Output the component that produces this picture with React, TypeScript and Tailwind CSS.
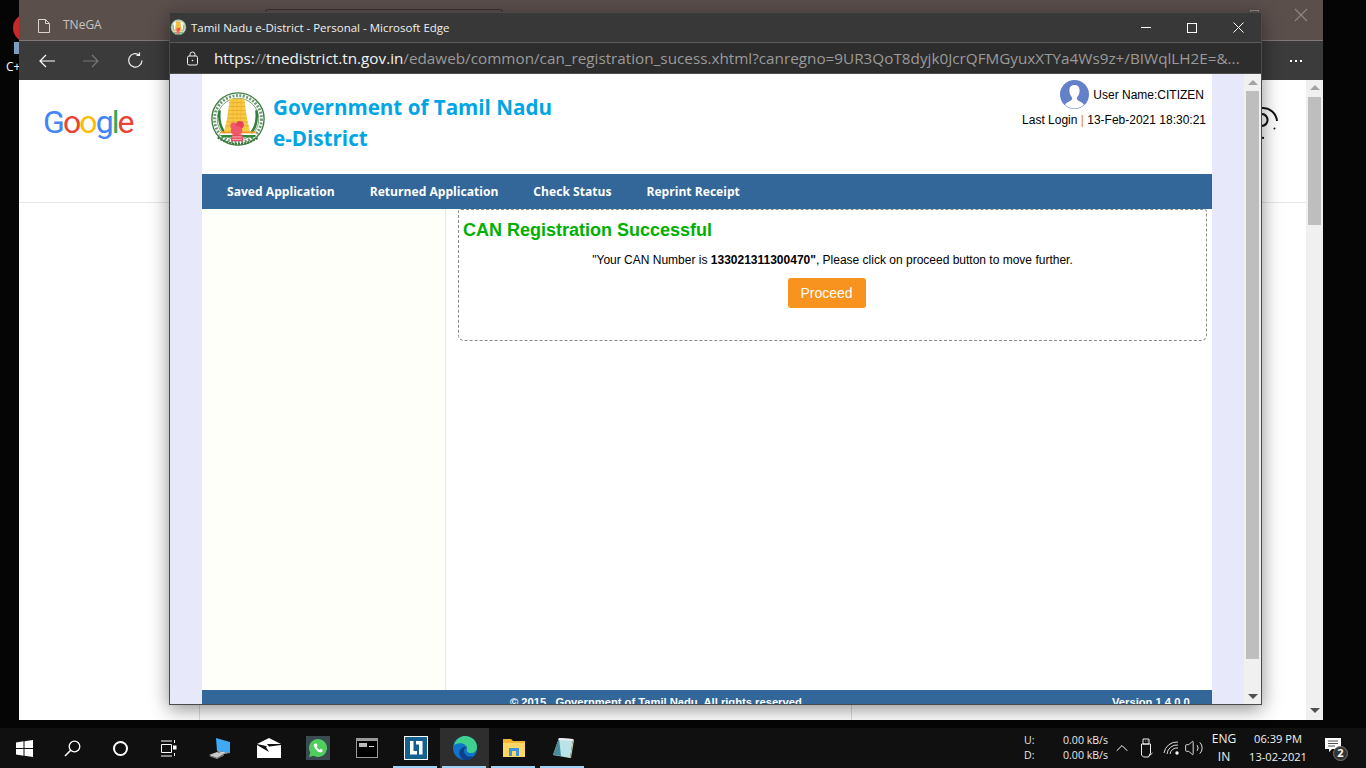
import { ChevronUp, Volume2 } from "lucide-react";

const segoe = "font-['Open_Sans','Noto_Sans',sans-serif]";
const navItems = ["Saved Application", "Returned Application", "Check Status", "Reprint Receipt"];

function Emblem({ size }: { size: number }) {
  return (
    <svg width={size} height={size} viewBox="0 0 60 60">
      <circle cx="30" cy="29" r="27" fill="#fff" stroke="#3f7d3f" strokeWidth="1.4" />
      <circle cx="30" cy="29" r="24.3" fill="none" stroke="#2f6b3a" strokeWidth="3" strokeDasharray="2 1.6" opacity="0.7" />
      <circle cx="30" cy="29" r="21.5" fill="#fff" stroke="#4f8d4f" strokeWidth="0.8" />
      <path d="M11 20 q-2 15 6 24 M49 20 q2 15 -6 24" fill="none" stroke="#2f7d3a" strokeWidth="2.6" />
      <path d="M21.500 8 h15 l1.500 12 2 12 3 12 h-28 l3 -12 2 -12z" fill="#f8cb45" />
      <path d="M21 12 h16 M20.500 16 h17 M20 20 h18 M19.500 24 h19 M19 28 h20 M18 32 h22 M17 36 h24" stroke="#e7a52a" strokeWidth="0.9" />
      <path d="M25 8v30 M29 8v30 M33 8v30" stroke="#eeb32e" strokeWidth="0.7" />
      <path d="M12 42 h36 l1 2 h-38z" fill="#f39a2c" />
      <path d="M11 44 h38 v1.600 h-38z" fill="#fff" />
      <path d="M12 45.600 h36 l-1.500 2.400 h-33z" fill="#2e8b3e" />
      <circle cx="25.500" cy="36" r="3.400" fill="#ee5a70" />
      <circle cx="32" cy="35" r="4" fill="#e83f5a" />
      <ellipse cx="28.500" cy="41" rx="6" ry="5" fill="#f0566c" />
      <path d="M23.500 45 h11 l1 7 h-13z" fill="#ea4b62" />
      <path d="M24 47.500 h10 M24 50 h10" stroke="#fcc" strokeWidth="0.8" />
      <path d="M9 48 q21 14 42 0" fill="none" stroke="#3f7d3f" strokeWidth="2.400" strokeDasharray="2.200 1" />
    </svg>
  );
}

function TaskButton({ children, active, running }: { children: React.ReactNode; active?: boolean; running?: boolean }) {
  return (
    <div className={`relative flex h-full w-[49px] items-center justify-center ${active ? "bg-[#2e2e2e]" : ""}`}>
      {children}
      {running && <div className="absolute bottom-0 left-[2px] right-[3px] h-[2px] bg-[#9fd0f5]" />}
    </div>
  );
}

function BackWindow() {
  return (
    <div className="absolute left-[19px] top-0 flex h-[720px] w-[1304px] flex-col">
      <div className="relative flex h-[40px] shrink-0 items-center bg-[#5b4f4c] pl-[18px] pt-[11px]">
        <svg width="14" height="16" viewBox="0 0 14 16" fill="none" stroke="#d8d4d2" strokeWidth="1">
          <path d="M1.500 1.500 h7 l4 4 v9 h-11z M8.500 1.500 v4 h4" />
        </svg>
        <span className={`${segoe} ml-[12px] mt-[-1px] text-[12px] text-[#c9c2bf]`}>TNeGA</span>
        <div className="absolute left-[246px] top-[9px] h-[4px] w-[238px] rounded-t-[3px] border border-[#3a3230]" />
        <div className="absolute left-[1231px] top-[10px] h-[3px] w-[9px] border border-b-0 border-[#8f8784]" />
        <svg className="absolute left-[1275px] top-[8px]" width="14" height="14" viewBox="0 0 14 14" stroke="#8f8784" strokeWidth="1.100">
          <path d="M1 1 L13 13 M13 1 L1 13" />
        </svg>
      </div>
      <div className="flex h-[40px] shrink-0 items-center justify-between border-t border-[#807876] bg-[#3b3b3b] pl-[20px] pr-[20px]">
        <div className="flex items-center gap-[28px]">
          <svg width="16" height="14" viewBox="0 0 16 14" fill="none" stroke="#fff" strokeWidth="1.200">
            <path d="M16 7 H1 M7 1 L1 7 L7 13" />
          </svg>
          <svg width="16" height="14" viewBox="0 0 16 14" fill="none" stroke="#777" strokeWidth="1.200">
            <path d="M0 7 H15 M9 1 L15 7 L9 13" />
          </svg>
          <svg width="17" height="17" viewBox="0 0 17 17" fill="none" stroke="#f2f2f2" strokeWidth="1.200">
            <path d="M15 8.500 A6.700 6.700 0 1 1 12.400 3 M12.500 0.500 V3.400 H9.500" />
          </svg>
        </div>
        <div className="mr-[1px] flex gap-[3px]">
          <span className="h-[2px] w-[2px] bg-white" />
          <span className="h-[2px] w-[2px] bg-white" />
          <span className="h-[2px] w-[2px] bg-white" />
        </div>
      </div>
      <div className="flex min-h-0 flex-1 bg-white">
        <div className="flex min-w-0 flex-1 flex-col">
          <div className="relative h-[123px] shrink-0 border-b border-[#e6e6e6]">
            <div className="absolute left-[24px] top-[22px] font-['Roboto',sans-serif] text-[32px] leading-[40px] tracking-[-1.900px]">
              <span className="text-[#4285f4]">G</span>
              <span className="text-[#ea4335]">o</span>
              <span className="text-[#fbbc05]">o</span>
              <span className="text-[#4285f4]">g</span>
              <span className="text-[#34a853]">l</span>
              <span className="text-[#ea4335]">e</span>
            </div>
            <svg className="absolute left-[1231px] top-[26px]" width="30" height="36" viewBox="0 0 30 36" fill="none" stroke="#111" strokeWidth="2">
              <path d="M12 2 A14 14 0 0 1 27 15 M24 22 l1 1 M12 8 a6 6 0 1 1 -1 0 M6 34 a10 10 0 0 1 8 -2" />
            </svg>
          </div>
          <div className="flex-1" />
          <div className="flex h-[15px] shrink-0 pl-[180px]">
            <div className="h-full w-[653px] border-x border-[#ddd]" />
          </div>
        </div>
        <div className="flex w-[17px] shrink-0 flex-col items-center bg-[#f0f0f0] pt-[5px]">
          <div className="h-0 w-0 border-x-[5px] border-b-[5px] border-x-transparent border-b-[#a3a3a3]" />
          <div className="mt-[7px] h-[128px] w-[13px] bg-[#bebebe]" />
          <div className="flex-1" />
          <div className="mb-[7px] h-0 w-0 border-x-[5px] border-t-[5px] border-x-transparent border-t-[#505050]" />
        </div>
      </div>
    </div>
  );
}

function PageHeader() {
  return (
    <div className="flex h-[100px] shrink-0 justify-between">
      <div className="flex">
        <div className="ml-[7px] mt-[17px]">
          <Emblem size={58} />
        </div>
        <div className="ml-[6px] mt-[18px] font-['Open_Sans',sans-serif] text-[20.600px] font-bold leading-[31px] text-[#00a5e6]">
          <div>Government of Tamil Nadu</div>
          <div>e-District</div>
        </div>
      </div>
      <div className="flex flex-col items-end pr-[6px] pt-[6px] font-['Liberation_Sans',sans-serif] text-[12px] text-black">
        <div className="mr-[2px] flex items-center">
          <svg width="29" height="29" viewBox="0 0 29 29">
            <circle cx="14.500" cy="14.500" r="14.500" fill="#6380c9" />
            <path d="M14.500 5 c-4 0 -5.500 3 -5 7 c.3 2.500 1.600 4.500 2.600 5.500 c.4 1.700 -.6 3 -3 4 c-2 .8 -3.500 1.800 -4 3.500 a14.500 14.500 0 0 0 18.800 0 c-.5 -1.700 -2 -2.700 -4 -3.500 c-2.400 -1 -3.400 -2.300 -3 -4 c1 -1 2.300 -3 2.600 -5.500 c.5 -4 -1 -7 -5 -7z" fill="#fff" />
          </svg>
          <span className="ml-[4px]">User Name:CITIZEN</span>
        </div>
        <div className="mt-[2px]">
          Last Login <span className="text-[#e08a00]">|</span> 13-Feb-2021 18:30:21
        </div>
      </div>
    </div>
  );
}

function PageBody() {
  return (
    <div className="flex min-h-0 flex-1">
      <div className="w-[244px] shrink-0 border-r border-[#e6e6e0] bg-[#fffff9]" />
      <div className="ml-[12px] mr-[5px] min-w-0 flex-1">
        <div className="h-[132px] rounded-b-[6px] rounded-t-[3px] border border-dashed border-[#8a8a8a] px-[4px] font-['Liberation_Sans',sans-serif]">
          <h2 className="mt-[10px] text-[18px] font-bold leading-[21px] text-[#00b000]">CAN Registration Successful</h2>
          <p className="mt-[12px] text-center text-[12px] leading-[14px] text-black">
            "Your CAN Number is <b>133021311300470"</b>, Please click on proceed button to move further.
          </p>
          <div className="mt-[11px] flex justify-center">
            <button className="mr-[12px] h-[30px] w-[78px] rounded-[3px] bg-[#f7931e] text-[14px] text-white">Proceed</button>
          </div>
        </div>
      </div>
    </div>
  );
}

function FrontWindow() {
  return (
    <div className="absolute left-[169px] top-[12px] flex h-[693px] w-[1093px] flex-col overflow-hidden border border-[#4a4a4a] shadow-[0_4px_18px_rgba(0,0,0,0.45)]">
      <div className={`${segoe} flex h-[30px] shrink-0 items-center border-b border-[#5a5a5a] bg-[#383838]`}>
        <div className="flex">
          <Emblem size={17} />
        </div>
        <span className="ml-[4px] text-[11.500px] text-[#f0f0f0]">Tamil Nadu e-District - Personal - Microsoft Edge</span>
        <div className="ml-auto flex items-center">
          <div className="flex w-[46px] justify-center"><div className="h-px w-[10px] bg-white" /></div>
          <div className="flex w-[46px] justify-center"><div className="h-[10px] w-[10px] border border-white" /></div>
          <div className="flex w-[46px] justify-center">
            <svg width="11" height="11" viewBox="0 0 11 11" stroke="#fff" strokeWidth="1"><path d="M0.500 0.500 L10.500 10.500 M10.500 0.500 L0.500 10.500" /></svg>
          </div>
        </div>
      </div>
      <div className={`${segoe} flex h-[31px] shrink-0 items-center border-b border-[#4d4d4d] bg-[#2d2d2d] pl-[16px] text-[15.280px]`}>
        <svg width="13" height="15" viewBox="0 0 13 15" fill="none" stroke="#f2f2f2" strokeWidth="1">
          <rect x="1.500" y="5" width="10" height="9" rx="1.500" />
          <path d="M4 5 V3.500 a2.500 2.500 0 0 1 5 0 V5" />
          <circle cx="6.500" cy="9.500" r="0.800" fill="#f2f2f2" stroke="none" />
        </svg>
        <div className="ml-[15px] whitespace-nowrap text-[#9a9a9a]">
          <span className="text-[#f2f2f2]">https:</span>//<span className="text-[#f2f2f2]">tnedistrict.tn.gov.in</span>/edaweb/common/can_registration_sucess.xhtml?canregno=9UR3QoT8dyjk0JcrQFMGyuxXTYa4Ws9z+/BIWqlLH2E=&...
        </div>
      </div>
      <div className="flex min-h-0 flex-1">
        <div className="w-[32px] shrink-0 bg-[#e8e8fb]" />
        <div className="flex w-[1010px] shrink-0 flex-col bg-white">
          <PageHeader />
          <nav className="flex h-[35px] shrink-0 items-center gap-[35px] bg-[#336699] pl-[25px] pt-[1px] font-['Open_Sans',sans-serif] text-[12.100px] font-bold text-white">
            {navItems.map((item) => (
              <span key={item}>{item}</span>
            ))}
          </nav>
          <PageBody />
          <footer className="relative h-[14px] shrink-0 overflow-hidden bg-[#336699] font-['Liberation_Sans',sans-serif] text-[11.200px] font-bold leading-[14px] text-white">
            <span className="absolute left-[308px] top-[5px] whitespace-pre">© 2015,  Government of Tamil Nadu. All rights reserved.</span>
            <span className="absolute left-[910px] top-[5px]">Version 1.4.0.0</span>
          </footer>
        </div>
        <div className="w-[32px] shrink-0 bg-[#e8e8fb]" />
        <div className="flex w-[17px] shrink-0 flex-col items-center bg-[#f0f0f0] pt-[6px]">
          <div className="h-0 w-0 border-x-[5px] border-b-[5px] border-x-transparent border-b-[#a3a3a3]" />
          <div className="mt-[6px] h-[568px] w-[13px] bg-[#bebebe]" />
          <div className="flex-1" />
          <div className="mb-[5px] h-0 w-0 border-x-[5px] border-t-[5px] border-x-transparent border-t-[#505050]" />
        </div>
      </div>
    </div>
  );
}

function Taskbar() {
  return (
    <div className={`${segoe} absolute bottom-0 left-0 right-0 flex h-[40px] items-center bg-[#101010] text-white`}>
      <div className="flex h-full w-[48px] items-center justify-center">
        <svg width="17" height="17" viewBox="0 0 17 17" fill="#fff">
          <path d="M0 2.400 L7.500 1.300 V8 H0z M8.500 1.200 L17 0 V8 H8.500z M0 9 H7.500 V15.700 L0 14.600z M8.500 9 H17 V17 L8.500 15.800z" />
        </svg>
      </div>
      <div className="flex h-full w-[48px] items-center justify-center">
        <svg width="17" height="17" viewBox="0 0 17 17" fill="none" stroke="#fff" strokeWidth="1.300">
          <circle cx="10.500" cy="6.500" r="5.300" />
          <path d="M6.700 10.300 L1 16" strokeWidth="1.500" />
        </svg>
      </div>
      <div className="flex h-full w-[48px] items-center justify-center">
        <div className="h-[15px] w-[15px] rounded-full border-2 border-white" />
      </div>
      <div className="flex h-full w-[48px] items-center justify-center">
        <svg width="17" height="17" viewBox="0 0 17 17" fill="none" stroke="#fff" strokeWidth="1">
          <path d="M1 1 H12 M1 16 H12 M1.500 4.500 H11.500 V12.500 H1.500z M14.500 0 V3 M14.500 13 V16" />
          <rect x="13" y="5.500" width="3.500" height="4" fill="#fff" stroke="none" />
        </svg>
      </div>
      <div className="ml-[3px] flex h-full">
        <TaskButton>
          <svg width="24" height="24" viewBox="0 0 24 24">
            <path d="M8 2 L22 6 V17 L9 15z" fill="#3fa9f5" />
            <path d="M9 15 L22 17 L14 18z" fill="#d5d5d5" />
            <path d="M1 19 L9 16 L16 18 L9 22z" fill="#c9c9c9" />
            <path d="M2 20 L9 22.500 L16 19" fill="none" stroke="#8a8a8a" strokeWidth="1" />
          </svg>
        </TaskButton>
        <TaskButton>
          <svg width="24" height="20" viewBox="0 0 24 20">
            <path d="M0 6 L12 0 L24 6 L10 6 L16 14 L9 8 L0 6z" fill="#fff" />
            <path d="M0 7 L12 14 L9 9 L24 7 V20 H0z" fill="#fff" />
          </svg>
        </TaskButton>
        <TaskButton>
          <div className="flex h-[24px] w-[24px] items-center justify-center bg-[#3a4a50]">
            <svg width="20" height="20" viewBox="0 0 20 20">
              <path d="M10 1 a9 9 0 0 0 -7.700 13.600 L1 19 l4.500 -1.200 A9 9 0 1 0 10 1z" fill="#4fce5d" />
              <path d="M7 5.500 c-.8.4 -1.500 1.500 -1 3 c.8 2.500 3.200 5 5.700 5.800 c1.500.4 2.600 -.3 3 -1.200 l-.1 -1.300 l-2 -1 l-1 1 c-1.300 -.6 -2.400 -1.700 -3 -3 l1 -1 l-1 -2.200z" fill="#fff" />
            </svg>
          </div>
        </TaskButton>
        <TaskButton>
          <div className="h-[20px] w-[22px] border border-[#9a9a9a] bg-black">
            <div className="h-[2px] bg-[#9a9a9a]" />
            <div className="ml-[2px] mt-[2px] flex items-center gap-[2px]">
              <span className="h-[4px] w-[8px] bg-[#bbb]" />
              <span className="mt-[3px] h-px w-[5px] bg-[#ddd]" />
            </div>
          </div>
        </TaskButton>
        <TaskButton running>
          <div className="flex h-[24px] w-[24px] items-center justify-center border border-white bg-[#14608f]">
            <svg width="16" height="16" viewBox="0 0 16 16" fill="#fff">
              <path d="M2 1 H5.500 V11 H9 V14.500 H2z M8 1 H14.500 V14.500 H11 V4.500 H8z" />
            </svg>
          </div>
        </TaskButton>
        <TaskButton active running>
          <svg width="24" height="24" viewBox="0 0 24 24">
            <circle cx="12" cy="12" r="12" fill="#1173c9" />
            <path d="M1 9 C3 2 9 0 12 0 c7 0 12 5 12 11 c0 4 -3 6 -6 6 c-3 0 -5 -2 -4 -4 C14 8 8 5 1 9z" fill="#3fd08c" />
            <path d="M12 24 c-5 -1 -7 -6 -5 -10 c2 -3 5 -4 7 -3 c-3 1 -4 4 -2 7 c2 3 6 3 9 2 c-2 2.600 -5 4.500 -9 4z" fill="#0c3f8c" />
          </svg>
        </TaskButton>
        <TaskButton running>
          <svg width="22" height="20" viewBox="0 0 22 20">
            <path d="M0 1 H8 L10 3 H22 V19 H0z" fill="#f2b632" />
            <path d="M0 5 H22 V19 H0z" fill="#ffd766" />
            <path d="M6 18 V10 H16 V18 H13 V13 H9 V18z" fill="#3e93dc" />
          </svg>
        </TaskButton>
        <TaskButton running>
          <svg width="24" height="24" viewBox="0 0 24 24">
            <path d="M8 2 L22 3 L19 22 L2 19z" fill="#b9e3e6" />
            <path d="M8 2 L2 19 L10 20z" fill="#4a8d99" />
            <path d="M19 22 L22 3 L23 4 L20 22z" fill="#d8d0b0" />
            <path d="M8 2 L22 3 L21.500 5 L7.500 4z" fill="#eee" />
          </svg>
        </TaskButton>
      </div>
      <div className="ml-auto flex h-full items-center">
        <div className="grid w-[84px] grid-cols-[39px_45px] whitespace-nowrap text-[10.600px] leading-[15px] text-[#e8e8e8]">
          <span>U:</span>
          <span>0.00 kB/s</span>
          <span>D:</span>
          <span>0.00 kB/s</span>
        </div>
        <ChevronUp className="ml-[4px]" size={20} color="#fff" strokeWidth={1.200} />
        <svg className="ml-[8px]" width="14" height="20" viewBox="0 0 14 20" fill="none" stroke="#eee" strokeWidth="1">
          <path d="M3 1 H9 V6 H3z M1.500 6 H10.500 V15 l-2 4 H3.500 l-2 -2z M5 3 h.5 M7 3 h.5 M9 18 l3.500 -3" />
        </svg>
        <svg className="ml-[9px]" width="18" height="16" viewBox="0 0 18 16" fill="none" stroke="#ddd" strokeWidth="1">
          <path d="M1 13 A13 13 0 0 1 15 2 M4 14 A10 10 0 0 1 15 5 M7 14 A7 7 0 0 1 15 8" />
          <circle cx="14" cy="13" r="1.700" fill="#fff" stroke="none" />
        </svg>
        <Volume2 className="ml-[3px]" size={20} color="#eee" strokeWidth={1.100} />
        <div className="ml-[5px] w-[30px] text-center text-[12px] leading-[18px] text-[#f0f0f0]">
          <div>ENG</div>
          <div>IN</div>
        </div>
        <div className="ml-[6px] w-[66px] text-center text-[11.100px] leading-[18px] text-[#f0f0f0]">
          <div>06:39 PM</div>
          <div>13-02-2021</div>
        </div>
        <div className="relative ml-[14px] mr-[17px] h-[32px] w-[24px]">
          <svg className="absolute left-[0px] top-[6px]" width="16" height="15" viewBox="0 0 16 15">
            <path d="M0 0 H16 V11 H7 L4 14 V11 H0z" fill="#fff" />
            <path d="M3 3 H13 M3 5.500 H13 M3 8 H10" stroke="#222" strokeWidth="0.800" />
          </svg>
          <div className="absolute left-[8px] top-[14px] flex h-[15px] w-[15px] items-center justify-center rounded-full border border-[#777] bg-[#333] text-[11px] font-bold">2</div>
        </div>
      </div>
    </div>
  );
}

export default function App() {
  return (
    <div className="relative h-[768px] w-[1366px] overflow-hidden bg-[#050505]">
      <div className="absolute left-[13px] top-[14px] h-[28px] w-[28px] rounded-full bg-[#c8282a]" />
      <div className="absolute left-[14px] top-[42px] h-[12px] w-[12px] bg-[#7f9bc0]" />
      <div className={`${segoe} absolute left-[6px] top-[58px] text-[12px] text-white`}>C+</div>
      <BackWindow />
      <FrontWindow />
      <Taskbar />
    </div>
  );
}
